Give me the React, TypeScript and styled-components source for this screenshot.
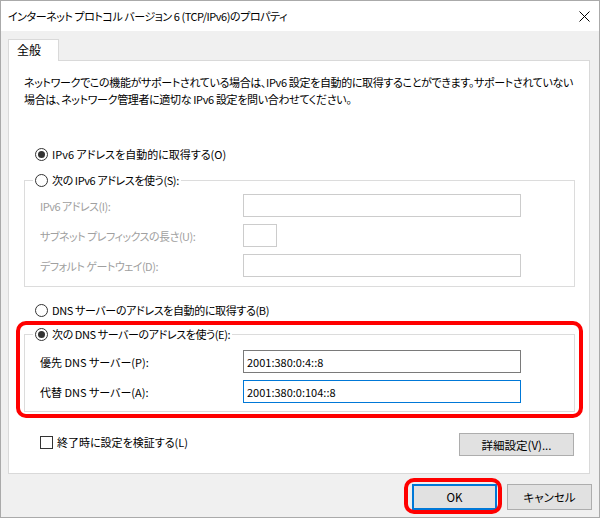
import React from "react";
import styled, { createGlobalStyle } from "styled-components";

const GlobalStyle = createGlobalStyle`
  html, body {
    margin: 0;
    padding: 0;
    background: #ffffff;
  }
  body {
    font-family: "Noto Sans CJK JP", "Noto Sans", sans-serif;
    font-size: 11px;
    color: #000000;
  }
  * {
    box-sizing: border-box;
  }
`;

const Window = styled.div`
    position: relative;
    width: 600px;
    height: 518px;
    border: 1px solid #aaaaaa;
    background: #f0f0f0;
    display: flex;
    flex-direction: column;
    font-feature-settings: "palt";
`;

const TitleBar = styled.div`
    height: 30px;
    flex-shrink: 0;
    background: #ffffff;
    display: flex;
    align-items: center;
    justify-content: space-between;
    padding-left: 7px;
`;

const Title = styled.span`
    font-size: 11px;
    line-height: 16px;
    letter-spacing: -0.45px;
`;

const CloseButton = styled.div`
    width: 30px;
    height: 30px;
    display: flex;
    align-items: center;
    justify-content: center;
`;

const Body = styled.div`
    flex: 1;
    display: flex;
    flex-direction: column;
    padding: 8px 7px 7px 7px;
`;

const TabStrip = styled.div`
    position: relative;
    z-index: 1;
    display: flex;
    height: 22px;
    margin-bottom: -1px;
`;

const Tab = styled.div`
    width: 51px;
    height: 22px;
    background: #ffffff;
    border: 1px solid #d9d9d9;
    border-bottom: none;
    padding-left: 8px;
    line-height: 20px;
    font-size: 12px;
`;

const Panel = styled.div`
    height: 414px;
    margin-right: 2px;
    background: #ffffff;
    border: 1px solid #d9d9d9;
    padding: 13px 14px 0 15px;
    display: flex;
    flex-direction: column;
`;

const Description = styled.p`
    margin: 0;
    line-height: 17px;
    letter-spacing: -0.35px;
    white-space: nowrap;
`;

const OptionRow = styled.label<{ $top: number; $indent: number; $tight?: boolean }>`
    display: flex;
    align-items: center;
    gap: 4px;
    height: 18px;
    margin-top: ${(p) => p.$top}px;
    margin-left: ${(p) => p.$indent}px;
    letter-spacing: ${(p) => (p.$tight ? "-0.37px" : "0")};
    white-space: nowrap;
`;

const RadioCircle = styled.span<{ $checked?: boolean }>`
    position: relative;
    width: 13px;
    height: 13px;
    flex-shrink: 0;
    border: 1px solid #333333;
    border-radius: 50%;
    background: #ffffff;

    &::after {
        content: "";
        display: ${(p) => (p.$checked ? "block" : "none")};
        position: absolute;
        left: 2px;
        top: 2px;
        width: 7px;
        height: 7px;
        border-radius: 50%;
        background: #333333;
    }
`;

const CheckBox = styled.span`
    width: 13px;
    height: 13px;
    flex-shrink: 0;
    border: 1px solid #333333;
    background: #ffffff;
`;

const GroupBox = styled.fieldset<{ $top: number; $padTop: number; $padBottom: number }>`
    margin: ${(p) => p.$top}px 0 0 0;
    padding: ${(p) => p.$padTop}px 0 ${(p) => p.$padBottom}px 0;
    border: 1px solid #dcdcdc;
    min-width: 0;
`;

const GroupLegend = styled.legend`
    margin-left: 8px;
    padding: 0 2px;
    height: 18px;
`;

const LegendOption = styled.span`
    display: flex;
    align-items: center;
    gap: 4px;
    height: 18px;
    letter-spacing: -0.4px;
    white-space: nowrap;
`;

const FieldGrid = styled.div`
    display: grid;
    grid-template-columns: 203px auto;
    row-gap: 7px;
    align-items: center;
    padding-left: 15px;
`;

const FieldLabel = styled.span<{ $disabled?: boolean }>`
    color: ${(p) => (p.$disabled ? "#a0a0a0" : "#000000")};
    letter-spacing: ${(p) => (p.$disabled ? "-0.5px" : "0")};
    white-space: nowrap;
`;

const TextBox = styled.input<{ $width: number; $state: "disabled" | "normal" | "focused" }>`
    width: ${(p) => p.$width}px;
    height: 23px;
    margin: 0;
    padding: 0 0 0 3px;
    border: 1px solid
        ${(p) => (p.$state === "disabled" ? "#cccccc" : p.$state === "focused" ? "#0078d7" : "#7a7a7a")};
    background: #ffffff;
    font: inherit;
    font-size: 11px;
    color: #000000;
    outline: none;
`;

const BottomRow = styled.div`
    display: flex;
    justify-content: space-between;
    align-items: flex-start;
    margin-top: 21px;
    padding-left: 16px;
    padding-right: 1px;
`;

const PushButton = styled.button<{ $width: number; $height: number; $default?: boolean }>`
    width: ${(p) => p.$width}px;
    height: ${(p) => p.$height}px;
    margin: 0;
    padding: 0;
    background: #e1e1e1;
    border: ${(p) => (p.$default ? "2px solid #0078d7" : "1px solid #adadad")};
    font: inherit;
    font-size: 11.5px;
    color: #000000;
`;

const Footer = styled.div`
    display: flex;
    justify-content: flex-end;
    gap: 10px;
    margin-top: 10px;
`;

const Highlight = styled.div<{ $left: number; $top: number; $width: number; $height: number }>`
    position: absolute;
    left: ${(p) => p.$left}px;
    top: ${(p) => p.$top}px;
    width: ${(p) => p.$width}px;
    height: ${(p) => p.$height}px;
    border: 4px solid #ff0000;
    border-radius: 10px;
    pointer-events: none;
`;

export default function App() {
    return (
        <>
            <GlobalStyle />
            <Window>
                <TitleBar>
                    <Title>インターネット プロトコル バージョン 6 (TCP/IPv6)のプロパティ</Title>
                    <CloseButton>
                        <svg width="11" height="11" viewBox="0 0 11 11">
                            <path d="M0.5 0.5 L10.5 10.5 M10.5 0.5 L0.5 10.5" stroke="#000" strokeWidth="1" fill="none" />
                        </svg>
                    </CloseButton>
                </TitleBar>
                <Body>
                    <TabStrip>
                        <Tab>全般</Tab>
                    </TabStrip>
                    <Panel>
                        <Description>
                            ネットワークでこの機能がサポートされている場合は、IPv6 設定を自動的に取得することができます。サポートされていない
                            <br />
                            場合は、ネットワーク管理者に適切な IPv6 設定を問い合わせてください。
                        </Description>

                        <OptionRow $top={37} $indent={11}>
                            <RadioCircle $checked />
                            IPv6 アドレスを自動的に取得する(O)
                        </OptionRow>

                        <GroupBox $top={8} $padTop={5} $padBottom={9}>
                            <GroupLegend>
                                <LegendOption>
                                    <RadioCircle />
                                    次の IPv6 アドレスを使う(S):
                                </LegendOption>
                            </GroupLegend>
                            <FieldGrid>
                                <FieldLabel $disabled>IPv6 アドレス(I):</FieldLabel>
                                <TextBox $width={278} $state="disabled" readOnly />
                                <FieldLabel $disabled>サブネット プレフィックスの長さ(U):</FieldLabel>
                                <TextBox $width={34} $state="disabled" readOnly />
                                <FieldLabel $disabled>デフォルト ゲートウェイ(D):</FieldLabel>
                                <TextBox $width={278} $state="disabled" readOnly />
                            </FieldGrid>
                        </GroupBox>

                        <OptionRow $top={14} $indent={11} $tight>
                            <RadioCircle />
                            DNS サーバーのアドレスを自動的に取得する(B)
                        </OptionRow>

                        <GroupBox $top={6} $padTop={7} $padBottom={8}>
                            <GroupLegend>
                                <LegendOption>
                                    <RadioCircle $checked />
                                    次の DNS サーバーのアドレスを使う(E):
                                </LegendOption>
                            </GroupLegend>
                            <FieldGrid>
                                <FieldLabel>優先 DNS サーバー(P):</FieldLabel>
                                <TextBox $width={278} $state="normal" value="2001:380:0:4::8" readOnly />
                                <FieldLabel>代替 DNS サーバー(A):</FieldLabel>
                                <TextBox $width={278} $state="focused" value="2001:380:0:104::8" readOnly />
                            </FieldGrid>
                        </GroupBox>

                        <BottomRow>
                            <OptionRow $top={0} $indent={0}>
                                <CheckBox />
                                終了時に設定を検証する(L)
                            </OptionRow>
                            <PushButton $width={115} $height={23}>詳細設定(V)...</PushButton>
                        </BottomRow>
                    </Panel>
                    <Footer>
                        <PushButton $width={85} $height={26} $default>OK</PushButton>
                        <PushButton $width={85} $height={26}>キャンセル</PushButton>
                    </Footer>
                </Body>
                <Highlight $left={15} $top={320} $width={567} $height={97} />
                <Highlight $left={403} $top={477} $width={98} $height={36} />
            </Window>
        </>
    );
}
